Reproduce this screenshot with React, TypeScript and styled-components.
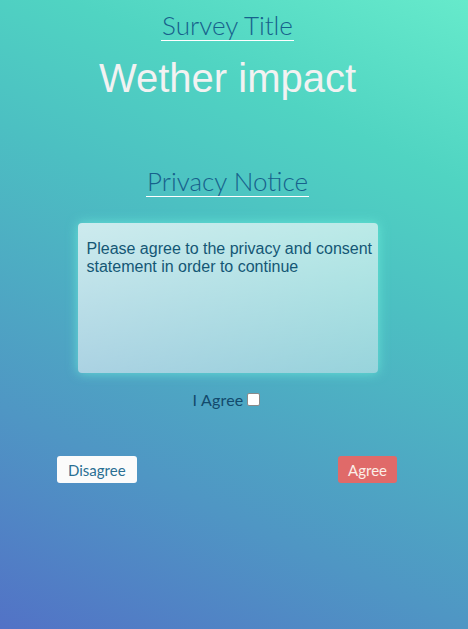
import React from "react";
import styled, { createGlobalStyle } from "styled-components";

const Global = createGlobalStyle`
  html, body { margin: 0; padding: 0; }
  body { font-family: "Liberation Sans", Arial, sans-serif; }
`;

const Page = styled.div`
  box-sizing: border-box;
  width: 468px;
  height: 629px;
  overflow: hidden;
  background: linear-gradient(25deg, #5272c6 0%, #4f96c4 26%, #4cc0c2 60%, #50d4c2 78%, #66eacb 100%);
  display: flex;
  flex-direction: column;
  align-items: center;
  padding: 10px 13px 0 0;
`;

const SubTitle = styled.h2`
  margin: 0;
  font-family: "Lato", sans-serif;
  font-weight: 300;
  font-size: 26px;
  line-height: 30px;
  color: #17618c;
  border-bottom: 1px solid #ffffff;
  padding: 0 1px;
`;

const MainTitle = styled.h1`
  margin: 14px 0 0;
  font-family: "Liberation Sans", Arial, sans-serif;
  font-weight: 400;
  font-size: 40px;
  line-height: 46px;
  color: #f2f2f2;
`;

const Section = styled(SubTitle)`
  margin-top: 65px;
`;

const Notice = styled.div`
  box-sizing: border-box;
  margin-top: 26px;
  width: 300px;
  height: 150px;
  border-radius: 4px;
  padding: 17px 3px 16px 9px;
  background: linear-gradient(165deg, rgba(255,255,255,0.72), rgba(255,255,255,0.42));
  box-shadow: 0 0 12px rgba(110, 240, 220, 0.75);
  font-family: "Liberation Sans", Arial, sans-serif;
  font-size: 16px;
  line-height: 18px;
  color: #145775;
`;

const AgreeRow = styled.label`
  margin-top: 17px;
  display: flex;
  align-items: center;
  gap: 4px;
  font-family: "Lato", sans-serif;
  font-size: 16px;
  letter-spacing: 0.2px;
  color: #134a6c;
  padding-right: 2px;
`;

const Box = styled.span`
  display: inline-block;
  width: 11px;
  height: 11px;
  border: 1px solid #8a8a8a;
  background: #ffffff;
  border-radius: 2px;
`;

const Buttons = styled.div`
  align-self: stretch;
  display: flex;
  justify-content: space-between;
  padding: 0 58px 0 57px;
  margin-top: 47px;
`;

const Button = styled.button<{ $primary?: boolean }>`
  height: 27px;
  padding: 0 ${(p) => (p.$primary ? "10px" : "11px")};
  border: none;
  border-radius: 3px;
  font-family: "Lato", sans-serif;
  font-size: 15px;
  background: ${(p) => (p.$primary ? "#e06a69" : "#fbfbfb")};
  color: ${(p) => (p.$primary ? "#fbefe8" : "#2a6f93")};
`;

export default function App() {
  return (
    <Page>
      <Global />
      <SubTitle>Survey Title</SubTitle>
      <MainTitle>Wether impact</MainTitle>
      <Section>Privacy Notice</Section>
      <Notice>Please agree to the privacy and consent statement in order to continue</Notice>
      <AgreeRow>
        I Agree <Box />
      </AgreeRow>
      <Buttons>
        <Button>Disagree</Button>
        <Button $primary>Agree</Button>
      </Buttons>
    </Page>
  );
}
